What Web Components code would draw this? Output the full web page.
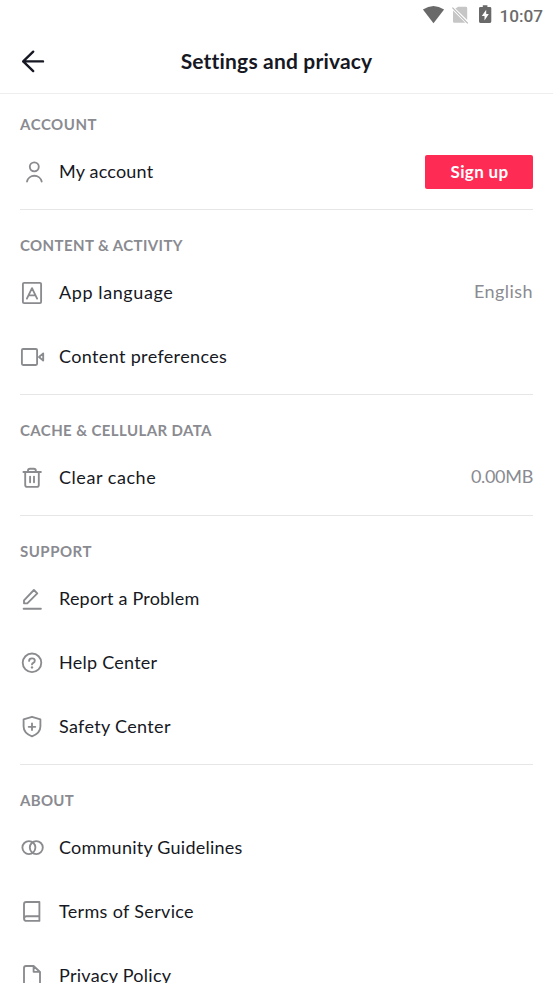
<!DOCTYPE html>
<html lang="en">
<head>
<meta charset="utf-8">
<title>Settings and privacy</title>
<style>
html, body { margin: 0; height: 983px; overflow: hidden; background: #fff; }
body { font-family: Lato, "Open Sans", sans-serif; color: #161823; }
</style>
</head>
<body>
<settings-screen>
  <status-bar slot="top"></status-bar>
  <title-bar slot="top" style="--track:.18px">Settings and privacy</title-bar>
  <settings-group first>
    <span slot="heading" style="letter-spacing:.55px">ACCOUNT</span>
    <settings-row icon="person" style="--track:.2px">My account<pill-button slot="end">Sign up</pill-button></settings-row>
  </settings-group>
  <settings-group>
    <span slot="heading" style="letter-spacing:.4px">CONTENT &amp; ACTIVITY</span>
    <settings-row icon="language" style="--track:.6px">App language<row-value slot="end" style="--track:.45px">English</row-value></settings-row>
    <settings-row icon="video" style="--track:.35px">Content preferences</settings-row>
  </settings-group>
  <settings-group>
    <span slot="heading" style="letter-spacing:.4px">CACHE &amp; CELLULAR DATA</span>
    <settings-row icon="trash" style="--track:.55px">Clear cache<row-value slot="end" style="--track:-.3px">0.00MB</row-value></settings-row>
  </settings-group>
  <settings-group>
    <span slot="heading" style="letter-spacing:.5px">SUPPORT</span>
    <settings-row icon="pen" style="--track:.2px">Report a Problem</settings-row>
    <settings-row icon="help" style="--track:.25px">Help Center</settings-row>
    <settings-row icon="shield" style="--track:.33px">Safety Center</settings-row>
  </settings-group>
  <settings-group>
    <span slot="heading" style="letter-spacing:.3px">ABOUT</span>
    <settings-row icon="circles" style="--track:.24px">Community Guidelines</settings-row>
    <settings-row icon="book" style="--track:.33px">Terms of Service</settings-row>
    <settings-row icon="page" style="--track:.27px">Privacy Policy</settings-row>
  </settings-group>
</settings-screen>
<script>
const define = (name, html, setup) => customElements.define(name, class extends HTMLElement {
  constructor() {
    super();
    this.attachShadow({ mode: 'open' }).innerHTML = html;
  }
  connectedCallback() { if (setup) setup(this); }
});

define('settings-screen', `
<style>
:host { display: flex; flex-direction: column; height: 983px; overflow: hidden; background: #fff; }
header { flex: none; height: 93px; border-bottom: 1px solid #eeeeef; }
main { flex: 1; min-height: 0; overflow: hidden; }
</style>
<header><slot name="top"></slot></header>
<main><slot></slot></main>`);

define('status-bar', `
<style>
:host { display: flex; justify-content: flex-end; align-items: center; height: 30px; padding-right: 10px; box-sizing: border-box;
  font: 500 17.2px/30px Roboto, sans-serif; color: #6b6b6b; }
svg { display: block; margin-right: 6px; }
span { padding-top: 1px; }
</style>
<svg width="72" height="30" viewBox="421 0 72 30">
  <path d="M422.9 9.6 Q433.5 2.6 444.1 9.6 L433.5 23.2 Z" fill="#696969"/>
  <path d="M458.2 6.8 H465.8 Q467.2 6.8 467.2 8.2 V19.9 L455.4 8.6 Z M453 10.6 L465.3 22.8 H454.4 Q453 22.8 453 21.4 Z" fill="#c6c6c6"/>
  <path d="M452.4 7.6 L467.8 23.3" stroke="#b8b8b8" stroke-width="1.2"/>
  <path d="M482.8 5.2 H487.4 V7 H490 Q491.3 7 491.3 8.3 V21.6 Q491.3 22.9 490 22.9 H480.3 Q479 22.9 479 21.6 V8.3 Q479 7 480.3 7 H482.8 Z" fill="#696969"/>
  <path d="M486.2 9.8 L481.8 16 H484.5 V20.4 L488.8 14.1 H486.2 Z" fill="#fff"/>
</svg><span>10:07</span>`);

define('title-bar', `
<style>
:host { display: grid; grid-template-columns: 56px 1fr 56px; align-items: center; height: 61px; }
svg { display: block; margin-left: 18px; }
h1 { margin: 0; text-align: center; font-size: 21px; line-height: 28px; font-weight: 700; letter-spacing: var(--track); }
</style>
<svg width="30" height="30" viewBox="18 46 30 30" fill="none" stroke="#161823" stroke-width="2.4" stroke-linecap="round" stroke-linejoin="round">
  <path d="M33.2 51.7 L23.2 61.4 L33.2 71.1 M23.2 61.4 H43"/>
</svg>
<h1><slot></slot></h1>`);

define('settings-group', `
<style>
:host { display: block; margin: 0 20px; padding: 20px 0 5px; border-bottom: 1px solid #e6e6e7; }
:host([first]) { padding-top: 15px; }
h2 { margin: 0; height: 31px; font-size: 15px; line-height: 30px; font-weight: 700; color: #8a8b91; white-space: nowrap; }
</style>
<h2><slot name="heading"></slot></h2>
<slot></slot>`);

const ICONS = {
  person: '<circle cx="16.3" cy="8.8" r="4.5"/><path d="M9 23.5 A7.5 7.2 0 0 1 23.7 23.5"/>',
  language: '<rect x="4.9" y="3.9" width="18.2" height="20.2" rx="1.2"/><path d="M8.9 19.6 L14 9.2 L19.1 19.6 M10.6 16.3 H17.4"/>',
  video: '<rect x="3.9" y="6" width="15.2" height="16" rx="1.2"/><path d="M21 14 L25.2 10.4 V17.6 Z"/>',
  trash: '<path d="M5.4 8 H22.9 M10 8 V6.6 Q10 4.7 12 4.7 H15.8 Q17.8 4.7 17.8 6.6 V8 M7.2 8 V20.9 Q7.2 22.8 9.1 22.8 H18.9 Q20.8 22.8 20.8 20.9 V8 M12.1 12.6 V18.2 M16 12.6 V18.2"/>',
  pen: '<path d="M5.6 23.7 H22.9 M6 18.3 V15.3 L15.9 5 L19.3 8.4 L9.3 18.3 Z"/>',
  help: '<circle cx="14" cy="13.8" r="9.3"/><path d="M11.1 11.9 Q11.1 9.4 14 9.4 Q16.8 9.4 16.8 11.7 Q16.8 13.1 15.3 13.9 Q14 14.6 14 15.4"/><circle cx="14" cy="18.4" r="1.2" fill="#8a8b8f" stroke="none"/>',
  shield: '<path d="M14 3.8 L22.4 6.4 V13.6 Q22.4 20.3 14 23.4 Q5.6 20.3 5.6 13.6 V6.4 Z M14 10.5 V17.1 M10.7 13.8 H17.3"/>',
  circles: '<circle cx="10.9" cy="13.6" r="6.5"/><circle cx="18.3" cy="13.6" r="6.5"/>',
  book: '<path d="M21.4 4 H8.2 Q6 4 6 6.2 V20.4 Q6 22.9 8.6 22.9 H21.4 Z M6.2 20.4 Q6.2 18.2 8.6 18.2 H21.4"/>',
  page: '<path d="M15.6 4 H8 Q6 4 6 6 V21.2 Q6 23.2 8 23.2 H20 Q22 23.2 22 21.2 V10 L15.6 4 V9.8 H22"/>'
};

define('line-icon', `
<style>:host { display: block; flex: none; width: 28px; height: 28px; } svg { display: block; }</style>
<svg width="28" height="28" viewBox="0 0 28 28" fill="none" stroke="#8a8b8f" stroke-width="1.85" stroke-linecap="round" stroke-linejoin="round"></svg>`,
el => { el.shadowRoot.querySelector('svg').innerHTML = ICONS[el.getAttribute('name')] || ''; });

define('settings-row', `
<style>
:host { display: flex; align-items: center; height: 64px; }
line-icon { margin-left: -2px; margin-right: 13px; }
.label { flex: 1; padding-bottom: 2px; font-size: 18px; line-height: 26px; letter-spacing: var(--track); white-space: nowrap; }
</style>
<line-icon></line-icon><div class="label"><slot></slot></div><slot name="end"></slot>`,
el => {
  const icon = el.shadowRoot.querySelector('line-icon');
  icon.setAttribute('name', el.getAttribute('icon'));
  icon.shadowRoot.querySelector('svg').innerHTML = ICONS[el.getAttribute('icon')];
});

define('row-value', `
<style>
:host { display: block; padding-bottom: 4px; font-size: 18px; line-height: 26px; color: #8a8b91; letter-spacing: var(--track); }
</style>
<slot></slot>`);

define('pill-button', `
<style>
:host { display: block; }
button { display: block; width: 108px; height: 34px; padding: 0 0 0 1px; border: 0; border-radius: 2px; background: #fe2c55; color: #fff;
  font: 700 17px/34px Lato, sans-serif; letter-spacing: .35px; text-align: center; }
</style>
<button type="button"><slot></slot></button>`);
</script>
</body>
</html>
